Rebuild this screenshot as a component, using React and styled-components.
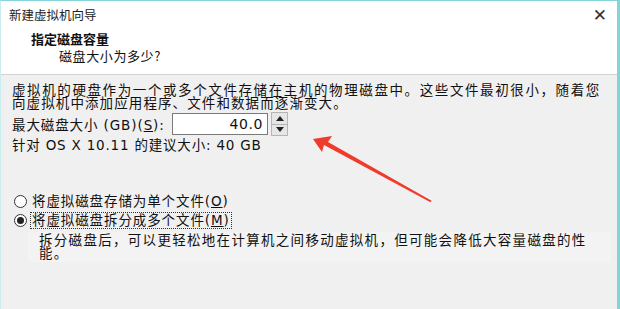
import React from "react";
import styled, { createGlobalStyle } from "styled-components";

const GlobalStyle = createGlobalStyle`
	html, body {
		margin: 0;
		padding: 0;
		background: #f0f0f0;
	}
	body {
		font-family: "DejaVu Sans", "Noto Sans CJK SC", sans-serif;
		color: #111;
	}
`;

const Window = styled.div`
	position: relative;
	width: 620px;
	height: 309px;
	box-sizing: border-box;
	border-top: 1px solid #86d4da;
	border-left: 1px solid #c9eef0;
	border-right: 3px solid #86d4da;
	background: #f0f0f0;
	overflow: hidden;
	display: flex;
	flex-direction: column;
`;

const Header = styled.div`
	background: #fff;
	height: 73px;
	border-bottom: 1px solid #d2d2d2;
	display: flex;
	flex-direction: column;
`;

const TitleBar = styled.div`
	display: flex;
	align-items: center;
	justify-content: space-between;
	height: 26px;
	padding: 0 10px 0 8px;
`;

const Title = styled.span`
	font-family: "Noto Sans CJK SC", sans-serif;
	font-size: 12.5px;
	color: #222;
`;

const Close = styled.span`
	font-family: "DejaVu Sans", sans-serif;
	font-size: 17px;
	color: #333;
	line-height: 1;
	margin-top: 2px;
`;

const Heading = styled.div`
	font-family: "Noto Sans CJK SC", sans-serif;
	font-weight: bold;
	font-size: 13px;
	margin: 3px 0 0 30px;
	line-height: 17px;
`;

const SubHeading = styled.div`
	font-family: "Noto Sans CJK SC", sans-serif;
	font-size: 13px;
	margin: 0 0 0 58px;
	line-height: 17px;
	letter-spacing: 0.6px;
`;

const Body = styled.div`
	padding: 9px 12px 0 11px;
	display: flex;
	flex-direction: column;
	font-size: 13.5px;
`;

const Paragraph = styled.p`
	margin: 0;
	line-height: 13px;
	letter-spacing: ${(p) => p.$spacing || "1.3px"};
	white-space: nowrap;
`;

const SizeRow = styled.div`
	display: flex;
	align-items: center;
	margin-top: 1px;
	height: 26px;
`;

const Label = styled.label`
	letter-spacing: 0.9px;
	width: 160px;
`;

const Underline = styled.span`
	text-decoration: underline;
`;

const NumberBox = styled.div`
	width: 96px;
	height: 22px;
	box-sizing: border-box;
	border: 1px solid #7a7a7a;
	background: #fff;
	display: flex;
	align-items: center;
	justify-content: flex-end;
	padding-right: 4px;
	font-size: 14px;
	letter-spacing: 0.6px;
`;

const Spinner = styled.div`
	margin-left: 3px;
	width: 17px;
	height: 24px;
	box-sizing: border-box;
	border: 1px solid #b5b5b5;
	background: #e6e6e6;
	display: flex;
	flex-direction: column;
`;

const SpinBtn = styled.div`
	flex: 1;
	display: flex;
	align-items: center;
	justify-content: center;
	border-top: ${(p) => (p.$down ? "1px solid #b5b5b5" : "none")};
`;

const Hint = styled.div`
	margin-top: 0;
	letter-spacing: 0.8px;
	line-height: 16px;
`;

const Options = styled.div`
	margin-top: 40px;
	display: flex;
	flex-direction: column;
	gap: 2px;
`;

const Option = styled.div`
	display: flex;
	align-items: center;
	height: 17px;
`;

const Radio = styled.span`
	width: 13px;
	height: 13px;
	box-sizing: border-box;
	border-radius: 50%;
	border: 1px solid #333;
	background: #fff;
	margin: 0 4px 0 2px;
	display: flex;
	align-items: center;
	justify-content: center;
	&::after {
		content: "";
		width: 7px;
		height: 7px;
		border-radius: 50%;
		background: ${(p) => (p.$checked ? "#222" : "transparent")};
	}
`;

const OptionText = styled.span`
	letter-spacing: 0.9px;
	padding: 0 1px;
	outline: ${(p) => (p.$focus ? "1px dotted #333" : "none")};
	line-height: 15px;
`;

const Description = styled.div`
	margin: 3px 0 0 16px;
	padding: 2px 10px 2px 11px;
	background: #f3f3f3;
	width: 562px;
`;

const Arrow = styled.svg`
	position: absolute;
	left: 300px;
	top: 128px;
`;

function SpinArrow({ down }) {
	return (
		<svg width="8" height="5" viewBox="0 0 8 5">
			<path d={down ? "M0 0 H8 L4 5 Z" : "M0 5 H8 L4 0 Z"} fill="#222" />
		</svg>
	);
}

export default function App() {
	return (
		<>
			<GlobalStyle />
			<Window>
				<Header>
					<TitleBar>
						<Title>新建虚拟机向导</Title>
						<Close>✕</Close>
					</TitleBar>
					<Heading>指定磁盘容量</Heading>
					<SubHeading>磁盘大小为多少?</SubHeading>
				</Header>
				<Body>
					<Paragraph $spacing="1.6px">
						虚拟机的硬盘作为一个或多个文件存储在主机的物理磁盘中。这些文件最初很小，随着您
					</Paragraph>
					<Paragraph $spacing="1.1px">向虚拟机中添加应用程序、文件和数据而逐渐变大。</Paragraph>
					<SizeRow>
						<Label htmlFor="size">
							最大磁盘大小 (GB)(<Underline>S</Underline>):
						</Label>
						<NumberBox id="size">40.0</NumberBox>
						<Spinner>
							<SpinBtn>
								<SpinArrow />
							</SpinBtn>
							<SpinBtn $down>
								<SpinArrow down />
							</SpinBtn>
						</Spinner>
					</SizeRow>
					<Hint>针对 OS X 10.11 的建议大小: 40 GB</Hint>
					<Options>
						<Option>
							<Radio />
							<OptionText>
								将虚拟磁盘存储为单个文件(<Underline>O</Underline>)
							</OptionText>
						</Option>
						<Option>
							<Radio $checked />
							<OptionText $focus>
								将虚拟磁盘拆分成多个文件(<Underline>M</Underline>)
							</OptionText>
						</Option>
					</Options>
					<Description>
						<Paragraph $spacing="1.3px">
							拆分磁盘后，可以更轻松地在计算机之间移动虚拟机，但可能会降低大容量磁盘的性
						</Paragraph>
						<Paragraph>能。</Paragraph>
					</Description>
				</Body>
				<Arrow width="140" height="80" viewBox="0 0 140 80">
					<polygon points="12,10 31,7 27,13 131,72 129,73 23,16 21,23" fill="#ef3b2c" />
				</Arrow>
			</Window>
		</>
	);
}
